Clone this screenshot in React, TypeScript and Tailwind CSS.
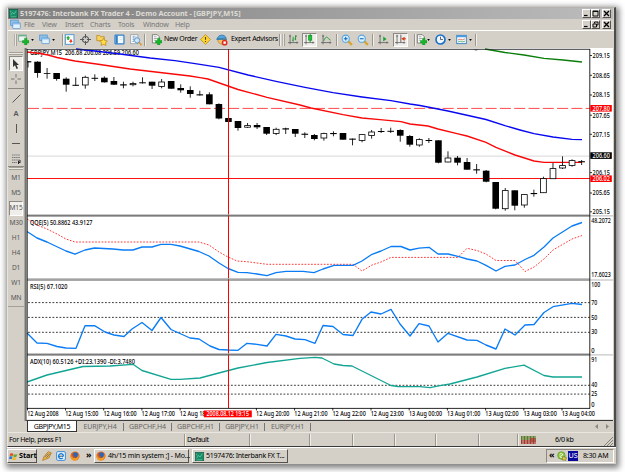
import React from "react";
import clsx from "clsx";

const FONT = "'Noto Sans', 'Open Sans', sans-serif";

// [bullish, body top, body bottom, high, low]
const candles: [number, number, number, number, number][] = [
  [0, 61.2, 62.4, 61, 67.5],
  [0, 61.7, 73, 61.3, 77.7],
  [0, 73, 73.8, 68, 78.7],
  [0, 73, 79, 73, 80.7],
  [0, 78.7, 84.7, 77.3, 91.7],
  [0, 84.8, 85.8, 77.3, 85.8],
  [1, 77, 85.3, 75.7, 88.7],
  [0, 77.8, 78.8, 74.3, 81],
  [0, 77.7, 82.3, 76.3, 82.6],
  [0, 81, 84.7, 77, 85],
  [0, 84.3, 85.5, 81.7, 88.3],
  [1, 83.3, 85, 81.7, 86.3],
  [0, 82.3, 83.3, 77.3, 83.5],
  [0, 81.7, 85.7, 81.7, 89],
  [1, 81.7, 86.7, 79, 88.3],
  [0, 81, 88.7, 81, 88.7],
  [0, 88, 90.3, 84.3, 92.7],
  [0, 90, 94, 86.3, 97.7],
  [0, 94.3, 95.4, 90.7, 95.6],
  [0, 94.3, 104.3, 92.3, 104.3],
  [0, 104, 118.5, 103.3, 119.3],
  [0, 118, 122, 118, 122],
  [0, 121, 128, 121, 130.7],
  [1, 125.3, 127.5, 123, 128],
  [0, 125, 127.3, 123, 129],
  [0, 127, 133.7, 127, 135],
  [1, 129, 133.7, 127.7, 135],
  [0, 128.3, 129.5, 127.7, 134],
  [0, 129, 133.7, 129, 137],
  [0, 133.7, 134.8, 132.3, 138],
  [0, 135, 139, 134, 140.3],
  [1, 133.3, 138.3, 132.7, 140.7],
  [0, 133, 134.1, 131.3, 136.3],
  [0, 133, 139.7, 133, 139.7],
  [0, 138.6, 139.7, 138.6, 145.3],
  [1, 134.3, 140.7, 134.3, 142.3],
  [1, 131.7, 135.7, 130, 138.7],
  [0, 131, 132, 128, 133],
  [0, 130.8, 131.8, 127.7, 133],
  [0, 130, 135.7, 129.3, 141.7],
  [0, 136, 144.7, 135, 146.7],
  [1, 139.3, 145.3, 138.3, 146.7],
  [0, 140, 141, 138, 143],
  [0, 140.3, 162.7, 140.3, 163.3],
  [1, 157.7, 162.3, 151.3, 162.3],
  [0, 157.7, 162.7, 156, 165.3],
  [0, 162, 169.7, 158, 169.7],
  [0, 169.3, 170.4, 164, 173.7],
  [0, 170.7, 181.7, 170, 182.3],
  [0, 182, 208.7, 182, 209.3],
  [1, 190.3, 209, 188, 210.7],
  [0, 190.3, 205.7, 190.3, 210.3],
  [1, 194.3, 205.3, 194.3, 207.7],
  [0, 193, 194.1, 189.7, 196.7],
  [1, 178.3, 193, 176.7, 193],
  [1, 168.3, 179, 163, 179],
  [1, 165.3, 168.3, 156.3, 169],
  [1, 160.3, 165.7, 159.3, 166.7],
  [0, 161.2, 162.3, 160, 165],
];

const fastMa =
  "27,52 40,53.5 48,55 57,57.5 75,61 100,64.5 130,69 160,72.5 190,76 200,77.7 208,79 228,86 238,89.5 267,97.3 300,105 311,108 343,114.7 362,118 380,119.7 401,121.7 410,124 428,126 438,129 457,133.7 467,136 486,142.3 496,147.3 515,155 534,161 544,162.4 582,162.4";
const slowMa =
  "76,49 95,51 120,54 150,58 175,60.7 200,64.3 219,67.3 248,75 276,81.3 305,87.3 333,92.7 362,97 391,100.7 410,104 420,105.5 448,111 486,119.5 505,125.7 520,130 534,133.7 553,137 572,139.3 582,139.6";
const longMa = "485,49 505,52.5 524,55 544,58.3 563,60 582,62";
const qqe =
  "27,231.5 37,238 47,242 66,251 75,254.2 85,250 94.5,248 113,249 123,250 133,250 142,247 152,247 161,244.3 171,244.3 180,246 199,251.5 209,256 219,263 228,268.5 238,272.3 247,272.7 257,274 267,275.7 276,272.7 286,271.4 303,271.4 314,272.7 323,269 334,265.4 353,265.4 362,261 372,254.3 381,251 391,246.5 401,246.5 410,250 419,248.2 429,247.3 438,254 448,254 458,256.3 467,259 477,261 486,265.3 496,271 505,266.3 515,265 525,259.5 534,255.3 544,247 553,238 572,226 582,222.5";
const qqeSignal =
  "27,219 37,225 47,229 57,234 66,239 75,242 199,242 209,245 219,252 228,257 237,261 247,261.7 267,264.3 353,264.3 362,271 372,265 381,262 391,257.4 458,257.4 467,248.3 477,250.5 486,254 496,260.5 515,260.5 525,271.5 534,267 544,259 553,250 572,239 582,235.5";
const rsi =
  "27,333 37,343 47,343.3 57,346.5 66,348 76,348.3 85,325.7 94.5,325.7 105,332 114,335 124,336.5 132,329 142,322.5 152,330.5 161,317.5 171,329.5 190,338 199,339 210,346 219,349.5 228,350 238,350.3 247,343.3 257,344.3 267,346 276,334.3 286,336 295,339 305,339.7 315,343.3 323,325.5 333,326.5 343,334.5 353,335.5 362,319.3 371,312 381,314 391,309.3 400,324 410,336 419,323.7 429,326 438,342 448,333.3 467,340 477,340.3 486,345 496,349 505,329 515,335 525,325 534,324.5 544,312.5 553,306.7 572,303.3 582,304.5";
const adx =
  "27,382 47,375 83,366.5 110,366 133,364.3 142,370.5 171,379.3 180,379.3 200,378 215,374 238,368 267,362.5 300,358.3 315,357.3 322,358 334,364 343,365.5 352,366 370,375 391,385.5 398,386.5 420,386.7 430,387.7 440,385.7 450,384 477,377 505,368.3 524,365.2 544,375.5 553,377 582,377";

const prices: [string, number][] = [
  ["209.15", 55.5],
  ["208.65", 75.3],
  ["208.15", 95],
  ["207.65", 115.2],
  ["207.15", 134.3],
  ["206.15", 172.6],
  ["205.65", 193],
  ["205.15", 211.8],
];

const priceTags: [string, number, string][] = [
  ["207.80", 108.3, "#ff0000"],
  ["206.60", 155.6, "#000000"],
  ["206.02", 178.7, "#ff0000"],
];

const scales: [string, number, number][] = [
  ["48.2072", 220.6, 19.6],
  ["17.6023", 275, 19.6],
  ["100", 284.7, 9],
  ["70", 302.5, 6],
  ["50", 317.2, 6],
  ["30", 332, 6],
  ["0", 350.3, 3.3],
  ["91", 359.8, 6],
  ["40", 385, 6],
  ["25", 393.8, 6],
  ["0", 404.6, 3.3],
];

const dates: [string, number][] = [
  ["12 Aug 2008", 27.5],
  ["12 Aug 15:00", 65.5],
  ["12 Aug 16:00", 103.7],
  ["12 Aug 17:00", 141.9],
  ["12 Aug 18:00", 180.1],
  ["12 Aug 20:00", 256.4],
  ["12 Aug 21:00", 294.6],
  ["12 Aug 22:00", 332.8],
  ["12 Aug 23:00", 371],
  ["13 Aug 00:00", 409.2],
  ["13 Aug 01:00", 447.4],
  ["13 Aug 02:00", 485.6],
  ["13 Aug 03:00", 523.8],
  ["13 Aug 04:00", 562],
];

interface TextProps {
  x: number;
  y: number;
  w: number;
  fill?: string;
  children: string;
}

// y is the vertical middle of the digits
const T = ({ x, y, w, fill = "#000", children }: TextProps) => (
  <text
    x={x}
    y={y + 2.3}
    textLength={w}
    lengthAdjust="spacingAndGlyphs"
    fill={fill}
    fontSize="6.4"
    fontWeight="500"
  >
    {children}
  </text>
);

const Chart = () => (
  <svg
    className="block shrink-0"
    width="587"
    height="373"
    viewBox="26 48 587 373"
    fontFamily={FONT}
  >
    <rect x="26" y="48" width="587" height="373" fill="#fff" />
    <T x={30} y={52.8} w={109}>
      {"GBPJPY,M15\u00a0 206.68 206.68 206.59 206.60"}
    </T>

    <path d="M27 156.1H590" stroke="#d8d8d8" />
    <path d="M28 108.4H590" stroke="#ff4a4a" strokeDasharray="11 3.3" />
    <path d="M27 178.5H590" stroke="#ff1010" />
    <path d="M473.5 49h5l-2.5 2.5z" fill="#b4b4b4" />

    <g fill="none" strokeWidth="1.35">
      <polyline points={longMa} stroke="#0a7d0a" />
      <polyline points={slowMa} stroke="#0808f0" />
      <polyline points={fastMa} stroke="#fa0808" />
    </g>

    {candles.map(([up, top, bottom, high, low], i) => {
      const x = 28 + i * 9.545;
      const left = i === 0 ? x - 1 : x - 3.3;
      const width = i === 0 ? 4.3 : 6.6;
      return (
        <g key={i}>
          <path d={`M${x} ${high}V${low}`} stroke="#000" strokeWidth=".85" />
          {up ? (
            <rect
              x={x - 2.9}
              y={top + 0.3}
              width="5.8"
              height={Math.max(bottom - top - 0.6, 1)}
              fill="#fff"
              stroke="#000"
              strokeWidth=".8"
            />
          ) : (
            <rect x={left} y={top} width={width} height={bottom - top} />
          )}
        </g>
      );
    })}

    {/* indicator windows */}
    <T x={30} y={222.5} w={62.5}>
      QQE(5) 50.8862 43.9127
    </T>
    <T x={30} y={286.3} w={37.5}>
      RSI(5) 67.1020
    </T>
    <T x={30} y={361.2} w={105}>
      ADX(10) 60.5126 +DI:23.1390 -DI:3.7480
    </T>
    <g stroke="#222" strokeWidth=".9" strokeDasharray="1.8 1.7">
      {[302.6, 317.4, 332.3, 385.3, 394.1].map((y) => (
        <path key={y} d={`M28 ${y}H590`} />
      ))}
    </g>
    <g fill="none" strokeWidth="1.35" strokeLinejoin="round">
      <polyline
        points={qqeSignal}
        stroke="#ff2020"
        strokeWidth=".9"
        strokeDasharray="1.7 1.5"
      />
      <polyline points={qqe} stroke="#0a7cf5" />
      <polyline points={rsi} stroke="#0a7cf5" />
      <polyline points={adx} stroke="#12a594" />
    </g>

    <path d="M228.5 49V408" stroke="#ff0000" />

    {/* pane frames */}
    <path d="M27 214.8H590M27 278.7H590M27 353.7H590" stroke="#b5b5b5" />
    <path d="M27 215.9H590M27 280H590M27 354.9H590" stroke="#555" strokeWidth="1.2" />
    <path d="M590 215.9H613M590 280H613M590 354.9H613" stroke="#888" strokeWidth=".6" />
    <path d="M26 49.3H590" stroke="#222" strokeWidth=".9" />
    <path d="M27.2 49V409" stroke="#111" strokeWidth=".9" />
    <path d="M589.8 49V408.5" stroke="#111" strokeWidth=".9" />
    <path d="M27 408.4H590" stroke="#111" strokeWidth=".9" />

    {prices.map(([label, y]) => (
      <g key={label}>
        <path d={`M590 ${y}h2`} stroke="#000" strokeWidth=".8" />
        <T x={592.6} y={y} w={17.2}>
          {label}
        </T>
      </g>
    ))}
    {priceTags.map(([label, y, color]) => (
      <g key={label}>
        <rect x="590.3" y={y - 3.3} width="21.5" height="6.6" fill={color} />
        <T x={592.6} y={y} w={17.2} fill="#fff">
          {label}
        </T>
      </g>
    ))}
    {scales.map(([label, y, w]) => (
      <T key={label + y} x={591.3} y={y} w={w}>
        {label}
      </T>
    ))}
    {dates.map(([label, x], i) => (
      <g key={label}>
        <path d={`M${x} 408v2.5`} stroke="#000" strokeWidth=".8" />
        <T x={x - 0.3} y={414} w={i === 0 ? 31.5 : 33.3}>
          {label}
        </T>
      </g>
    ))}
    <rect x="203.8" y="410.5" width="48" height="6.8" fill="#ff0000" />
    <T x={206.5} y={414} w={42.5} fill="#fff">
      2008.08.12 19:15
    </T>
    <path d="M26 420.4H613" stroke="#222" />
    <path d="M26.3 48V421" stroke="#555" strokeWidth=".7" />
  </svg>
);

interface IconProps {
  size?: number;
  children: React.ReactNode;
}

const Icon = ({ size = 11, children }: IconProps) => (
  <svg className="block shrink-0" width={size} height={size} viewBox="0 0 16 16" fill="none">
    {children}
  </svg>
);

const greenPlus = (
  <path
    d="M9.5 6h3.500v3.500H16V13h-3v3H9.500v-3h-3V9.500h3z"
    fill="#17b52a"
    stroke="#0a8d1a"
    strokeWidth=".6"
  />
);

const NewChartIcon = () => (
  <Icon>
    <rect x="1" y="1.5" width="11" height="9" fill="#e8f4ee" stroke="#5f9a80" />
    <path d="M1 2.5h11" stroke="#6cae90" strokeWidth="2" />
    {greenPlus}
  </Icon>
);

const ProfilesIcon = () => (
  <Icon>
    <rect x="1" y="1.5" width="11" height="8" fill="#8fc3ee" stroke="#4b8ac6" />
    <rect x="4" y="5.5" width="11" height="8.5" rx="1" fill="#dff0ff" stroke="#4b8ac6" />
    <path d="M4.5 7h10" stroke="#6eacdf" strokeWidth="1.5" />
  </Icon>
);

const MarketIcon = () => (
  <Icon>
    <rect x="2" y="1" width="12.5" height="14" fill="#fff" stroke="#4b9ad6" strokeWidth="1.4" />
    <path d="M6 2.5L9 6H3z" fill="#1fae35" />
    <path d="M4.500 6h3v2.500h-3z" fill="#1fae35" />
    <path d="M8.500 8h3v2h1.500L10 13 7 10h1.500z" fill="#e8432c" />
  </Icon>
);

const TargetIcon = () => (
  <Icon>
    <circle cx="8" cy="8" r="4.5" stroke="#55585c" strokeWidth="1.5" />
    <path d="M8 0v6M8 10v6M0 8h6M10 8h6" stroke="#55585c" strokeWidth="1.5" />
  </Icon>
);

const FavoritesIcon = () => (
  <Icon size={12}>
    <path d="M1 2h4l1 1.5h5V9H1z" fill="#f6d260" stroke="#b98a1b" />
    <path
      d="M10 5.5l1.7 3.2 3.5.6-2.5 2.500.6 3.500-3.300-1.600-3.200 1.600.6-3.500-2.500-2.500 3.500-.6z"
      fill="#ffdf45"
      stroke="#c08a10"
    />
  </Icon>
);

const PanelIcon = () => (
  <Icon>
    <rect x="1.5" y="1.5" width="13" height="13" rx="1" fill="#f5faff" stroke="#2f7fcb" strokeWidth="1.8" />
    <path d="M4 2v12" stroke="#2f7fcb" strokeWidth="3" />
    <path d="M8 5h5M8 8h5" stroke="#d5dde5" />
  </Icon>
);

const TesterIcon = () => (
  <Icon size={12}>
    <rect x="1" y="1" width="9.5" height="12" fill="#fff" stroke="#8a949e" />
    <path d="M3 4h6M3 7h6M3 10h3M5 2v8" stroke="#7f9fc0" />
    <circle cx="9.5" cy="8.5" r="3.5" fill="#cfe8fb" fillOpacity=".85" stroke="#3a86c8" />
    <path d="M12 11l3.5 4" stroke="#d59b2e" strokeWidth="2" />
  </Icon>
);

const OrderIcon = () => (
  <Icon>
    <path d="M2 1h7l3 3v9H2z" fill="#fff" stroke="#555" />
    <path d="M4 4h4M4 6.5h5M4 9h3" stroke="#888" />
    {greenPlus}
  </Icon>
);

const AlertIcon = () => (
  <Icon>
    <path d="M8 .8L15.2 8 8 15.2.8 8z" fill="#fbd433" stroke="#b9860d" />
    <path d="M8 4.5v4M8 10v1.7" stroke="#5a4100" strokeWidth="1.6" />
  </Icon>
);

const AdvisorIcon = () => (
  <Icon size={12}>
    <circle cx="8" cy="8" r="5.5" fill="#f2c267" stroke="#b68530" />
    <path d="M1.500 6.500C3 0 12 0 13.500 5.500z" fill="#57a5dc" stroke="#2875ae" />
    <path d="M.5 7h14" stroke="#2875ae" strokeWidth="1.5" />
    <circle cx="11.5" cy="11.5" r="3.8" fill="#e02a1c" />
    <rect x="9.9" y="9.9" width="3.2" height="3.2" fill="#fff" />
  </Icon>
);

const axes = <path d="M3 1v14M0 12.5h15M1.5 3h3M13 11v3" stroke="#555" strokeWidth="1.1" />;

const BarsIcon = () => (
  <Icon>
    {axes}
    <path d="M7.5 4v7M5.8 9h1.7M11 2v7M11 3h2M9.5 7H11" stroke="#17912a" strokeWidth="1.3" />
  </Icon>
);

const CandleIcon = () => (
  <Icon>
    {axes}
    <path d="M9 0v12" stroke="#0d8a20" strokeWidth="1.3" />
    <rect x="6.8" y="2" width="4.5" height="7" fill="#18c536" stroke="#0d8a20" />
  </Icon>
);

const LineIcon = () => (
  <Icon>
    {axes}
    <path d="M4 10c2-6 5-7 6.500-3.500L14 9" stroke="#2a9a3c" strokeWidth="1.3" />
  </Icon>
);

const ZoomIcon = ({ plus }: { plus?: boolean }) => (
  <Icon size={12}>
    <path d="M9.5 9.5l5 5" stroke="#d8a52c" strokeWidth="3" />
    <circle cx="6.3" cy="6.3" r="4.8" fill="#d9f0ff" stroke="#5ba3dc" strokeWidth="1.4" />
    <path d="M3.8 6.3h5" stroke="#1f6fb8" strokeWidth="1.5" />
    {plus && <path d="M6.3 3.8v5" stroke="#1f6fb8" strokeWidth="1.5" />}
  </Icon>
);

const ScrollIcon = () => (
  <Icon>
    {axes}
    <path d="M7.5 3.5l5 3.700-5 3.700z" fill="#19a52f" />
  </Icon>
);

const ShiftIcon = () => (
  <Icon>
    {axes}
    <path d="M8.5 1v11" stroke="#4a4a4a" strokeWidth="1.2" />
    <path d="M14 4v6l-5-3z" fill="#d8401a" />
    <path d="M12 7h4" stroke="#d8401a" strokeWidth="1.5" />
  </Icon>
);

const ClockIcon = () => (
  <Icon>
    <circle cx="8" cy="8" r="6.5" fill="#eef7ff" stroke="#1c6fc9" strokeWidth="2.4" />
    <path d="M8 4v4h3.5" stroke="#444" strokeWidth="1.2" />
  </Icon>
);

const TemplateIcon = () => (
  <Icon>
    <rect x="1" y="2" width="14" height="12" fill="#f6fbff" stroke="#3b86c8" strokeWidth="1.4" />
    <path d="M1 3.5h14" stroke="#4b9be0" strokeWidth="2.4" />
    <path d="M3 8.5l3-1 3 1 4-1.5" stroke="#d05030" />
    <path d="M3 11.5l3-1 3 1 4-1" stroke="#2a9a3c" />
  </Icon>
);

const FirefoxIcon = () => (
  <Icon size={10}>
    <circle cx="8" cy="8" r="7.3" fill="#e8731a" />
    <circle cx="8.5" cy="6.5" r="4.5" fill="#2f63b5" />
    <path d="M1 5c1 5 4 7 8 6 3-.5 4-3 3.500-6 3 5 0 10.300-5 10.300S.3 11 1 5z" fill="#f39a1f" />
    <path d="M2 3l4 2-1 3 4 1-3 2.500z" fill="#dd4f12" />
  </Icon>
);

const AppIcon = () => (
  <Icon size={9}>
    <rect x=".5" y=".5" width="15" height="15" fill="#178a66" stroke="#0a5540" />
    <path d="M3 11l3-5 3 3 4-6M3 14h10M3 3v3" stroke="#6bd0a8" strokeWidth="1.3" />
  </Icon>
);

const Arrow = () => (
  <svg className="block shrink-0" width="3" height="2" viewBox="0 0 4 3">
    <path d="M0 0h4L2 3z" />
  </svg>
);

const Sep = () => (
  <div className="h-3 w-0.5 shrink-0 border-r border-l border-r-[#f0eeea] border-l-[#9a978f]" />
);

const Grip = () => (
  <div className="h-3 w-[3px] shrink-0 border-x border-r-[#a4a199] border-l-[#b4b1a9] bg-[#eae7e1]" />
);

// each cell is centred on its icon
const Cell = ({ className, children }: { className: string; children: React.ReactNode }) => (
  <div className={clsx("flex h-full shrink-0 items-center justify-center", className)}>
    {children}
  </div>
);

const pressed =
  "border border-t-[#8c8982] border-l-[#8c8982] border-r-white border-b-white bg-[#f0eeea]";

const Toolbar = () => (
  <div className="flex h-[18px] items-center border-t border-white bg-[#d4d0c8] pl-[6px] text-[7px] tracking-[-0.28px] whitespace-nowrap text-black">
    <Grip />
    <Cell className="w-[13px]"><NewChartIcon /></Cell>
    <Cell className="w-[4px]"><Arrow /></Cell>
    <Cell className="ml-[3px] w-[14px]"><ProfilesIcon /></Cell>
    <Cell className="w-[4px]"><Arrow /></Cell>
    <Cell className="ml-[6px] w-[3px]"><Sep /></Cell>
    <Cell className="w-[10px]"><MarketIcon /></Cell>
    <Cell className="w-[23px]"><TargetIcon /></Cell>
    <Cell className="w-[10px]"><FavoritesIcon /></Cell>
    <Cell className="w-[24px]"><PanelIcon /></Cell>
    <Cell className="w-[9px]"><TesterIcon /></Cell>
    <Cell className="w-[10px]"><Sep /></Cell>
    <Cell className="w-[12px]"><OrderIcon /></Cell>
    <div className="w-[35px] pl-[2px]">New Order</div>
    <Cell className="w-[17px]"><AlertIcon /></Cell>
    <Cell className="w-[16px]"><AdvisorIcon /></Cell>
    <div className="w-[49px] pl-px">Expert Advisors</div>
    <Sep />
    <Cell className="w-[4px]"><Grip /></Cell>
    <Cell className="w-[16px]"><BarsIcon /></Cell>
    <Cell className="ml-px">
      <div className={clsx("flex h-[14px] w-[15px] items-center justify-center", pressed)}>
        <CandleIcon />
      </div>
    </Cell>
    <Cell className="w-[19px]"><LineIcon /></Cell>
    <Cell className="w-[2px]"><Sep /></Cell>
    <Cell className="w-[17px]"><ZoomIcon plus /></Cell>
    <Cell className="w-[16px]"><ZoomIcon /></Cell>
    <Cell className="w-[4px]"><Sep /></Cell>
    <Cell className="w-[17px]"><ScrollIcon /></Cell>
    <Cell className="ml-px">
      <div className={clsx("flex h-[14px] w-[15px] items-center justify-center", pressed)}>
        <ShiftIcon />
      </div>
    </Cell>
    <Cell className="ml-[5px] w-[3px]"><Sep /></Cell>
    <Cell className="w-[10px]"><OrderIcon /></Cell>
    <Cell className="w-[5px]"><Arrow /></Cell>
    <Cell className="ml-[3px] w-[13px]"><ClockIcon /></Cell>
    <Cell className="w-[4px]"><Arrow /></Cell>
    <Cell className="ml-[4px] w-[13px]"><TemplateIcon /></Cell>
    <Cell className="w-[4px]"><Arrow /></Cell>
    <Cell className="w-[8px]"><Sep /></Cell>
  </div>
);

const WinButton = ({ kind }: { kind: "min" | "max" | "restore" | "close" }) => (
  <div className="flex h-[9px] w-[9px] items-center justify-center border border-t-white border-r-[#55534e] border-b-[#55534e] border-l-white bg-[#d4d0c8]">
    <svg width="7" height="7" viewBox="0 0 7 7" fill="none" stroke="#000">
      {kind === "min" && <path d="M1 5.5h3.5" strokeWidth="1.2" />}
      {kind === "max" && <path d="M1 1h5v5H1zM1 1.5h5" strokeWidth=".9" />}
      {kind === "restore" && <path d="M2.5 2.5V1H6v3H4.500M1 3h3.500v3H1z" strokeWidth=".9" />}
      {kind === "close" && <path d="M1 1l5 5M6 1L1 6" strokeWidth="1.3" />}
    </svg>
  </div>
);

const HGrip = () => (
  <div className="mx-auto h-[3px] w-[14px] shrink-0 border-y border-t-[#a4a199] border-b-[#a4a199] bg-[#ece9e3]" />
);

const Tool = ({ className, children }: { className?: string; children: React.ReactNode }) => (
  <div className={clsx("flex h-[15px] items-center justify-center", className)}>{children}</div>
);

const periods = ["M1", "M5", "M15", "M30", "H1", "H4", "D1", "W1", "MN"];

const SideBar = () => (
  <div className="flex w-[17px] shrink-0 flex-col border-r border-[#aaa7a0] bg-[#d4d0c8] pt-[4px]">
    <HGrip />
    <div className={clsx("mx-px mt-px flex h-[15px] items-center justify-center", pressed)}>
      <svg width="8" height="10" viewBox="0 0 8 10">
        <path d="M1 0v8l2-1.700L4.500 10l1.500-.7L4.500 6H7z" fill="#333" />
      </svg>
    </div>
    <Tool>
      <svg width="10" height="10" viewBox="0 0 10 10" stroke="#777">
        <path d="M5 0v3.500M5 6.500V10M0 5h3.500M6.500 5H10" />
      </svg>
    </Tool>
    <div className="mt-0.5 border-t border-[#8c8982]" />
    <Tool className="mt-0.5">
      <svg width="9" height="9" viewBox="0 0 9 9" stroke="#555">
        <path d="M.5 8.5l8-8" />
      </svg>
    </Tool>
    <Tool>
      <span className="text-[7.5px] font-semibold text-[#555]">A</span>
    </Tool>
    <Tool>
      <svg width="1" height="9" viewBox="0 0 1 9">
        <path d="M.5 0v9" stroke="#555" />
      </svg>
    </Tool>
    <Tool>
      <svg width="8" height="1" viewBox="0 0 8 1">
        <path d="M0 .5h8" stroke="#555" />
      </svg>
    </Tool>
    <Tool>
      <svg width="10" height="10" viewBox="0 0 10 10" stroke="#777" fill="none">
        <path d="M1 1h8M1 3.5h8M1 6h8M1 8.5h5" strokeDasharray="1.5 .6" />
        <path d="M7.5 10V7H10M7.5 8.5H9.5" stroke="#222" />
      </svg>
    </Tool>
    <div className="border-t border-[#8c8982]" />
    <HGrip />
    <div className="mt-px border-b border-[#a4a199] text-center text-[6.6px] tracking-[-0.2px] text-[#555]">
      {periods.map((p) => (
        <div
          key={p}
          className={clsx(
            "mx-px flex h-[15px] items-center justify-center leading-none",
            p === "M15" && pressed
          )}
        >
          {p}
        </div>
      ))}
    </div>
  </div>
);

const tabs: [string, string][] = [
  ["EURJPY,H4", "w-[47px]"],
  ["GBPCHF,H4", "w-[48px]"],
  ["GBPCHF,H1", "w-[48px]"],
  ["GBPJPY,H1", "w-[45px]"],
  ["EURJPY,H1", "w-[46px]"],
];

const TabBar = () => (
  <div className="flex h-[11px] shrink-0 items-center bg-[#d4d0c8] pl-[19px] text-[7px] leading-none tracking-[-0.1px]">
    <div className="flex h-full w-[50px] items-center justify-center border-r border-b border-l border-[#333] bg-white tracking-[-0.35px] text-black">
      GBPJPY,M15
    </div>
    {tabs.map(([name, width]) => (
      <div
        key={name}
        className={clsx(
          "flex h-[8px] shrink-0 items-center justify-center border-r border-[#777] text-[#666]",
          width
        )}
      >
        {name}
      </div>
    ))}
    <div className="mr-[5px] ml-auto flex gap-[6px]">
      <svg width="4" height="5" viewBox="0 0 4 5"><path d="M3 0v5L0 2.500z" fill="#8a8780" /></svg>
      <svg width="4" height="5" viewBox="0 0 4 5"><path d="M1 0v5l3-2.500z" fill="#8a8780" /></svg>
    </div>
  </div>
);

const StatusBar = () => (
  <div className="flex h-[14px] shrink-0 items-center border-t border-[#e9e6e0] bg-[#d4d0c8] text-[7.1px] leading-none tracking-[-0.38px] whitespace-nowrap text-black">
    <div className="w-[175px] pl-px">For Help, press F1</div>
    <Cell className="w-[4px]"><Sep /></Cell>
    <div className="w-[61px]">Default</div>
    <Cell className="w-[3px]"><Sep /></Cell>
    <Cell className="ml-[57px] w-[3px]"><Sep /></Cell>
    <Cell className="ml-[40px] w-[3px]"><Sep /></Cell>
    <Cell className="ml-[39px] w-[3px]"><Sep /></Cell>
    <Cell className="ml-[38px] w-[3px]"><Sep /></Cell>
    <Cell className="ml-[40px] w-[3px]"><Sep /></Cell>
    <Cell className="ml-[36px] w-[3px]"><Sep /></Cell>
    <svg className="ml-[2px] block" width="15" height="8" viewBox="0 0 15 8">
      <path d="M0 2H15" stroke="#5b7d2a" strokeWidth="4" strokeDasharray="1.1 .4" />
      <path d="M0 6H15" stroke="#a8392e" strokeWidth="4" strokeDasharray="1.1 .4" />
      <path d="M9 4H15" stroke="#a8392e" strokeWidth="4" strokeDasharray="1.1 .4" />
    </svg>
    <div className="ml-[19px]">6/0 kb</div>
    <svg className="mr-px ml-auto block self-end" width="9" height="9" viewBox="0 0 9 9" stroke="#85827b">
      <path d="M0 9l9-9M3 9l6-6M6 9l3-3" />
    </svg>
  </div>
);

const raised =
  "border border-t-white border-l-white border-r-[#55534e] border-b-[#55534e] bg-[#d4d0c8]";

const TaskBar = () => (
  <div className="flex h-[17px] shrink-0 items-center border-t border-white bg-[#d4d0c8] text-[7.1px] leading-none tracking-[-0.22px] whitespace-nowrap text-black">
    <div className={clsx("flex h-[14px] w-[30px] items-center gap-px pl-px", raised)}>
      <svg className="block shrink-0" width="9" height="9" viewBox="0 0 16 16">
        <path d="M2 3c2-1.500 4-1 5.500 0L6.500 7.500C5 6.500 3 6.500 1 7.500z" fill="#e8481e" />
        <path d="M8.500 3.500c2 1.500 4 1.500 6.500 0L13.500 8c-2 1.300-4 1.300-6 0z" fill="#62ae2c" />
        <path d="M.8 8.500c2-1.300 4-1 5.500 0L5 13c-1.500-1-3.500-1-5 0z" fill="#2f78d8" />
        <path d="M7.200 9c2 1.300 4 1.300 6 0l-1.300 4.500c-2 1.300-4 1.300-6 0z" fill="#f5b81c" />
      </svg>
      <span className="text-[7.3px] font-bold tracking-[-0.1px]">Start</span>
    </div>
    <div className="ml-[5px]">
      <Icon size={10}>
        <path d="M1 15l2-6 7-8 5 2-4 8-7 3z" fill="#f4b53a" stroke="#a0681a" />
        <path d="M4 10l6-6M7 11l6-7" stroke="#6c7688" strokeWidth="1.5" />
      </Icon>
    </div>
    <div className="ml-[4px]">
      <Icon size={10}>
        <rect x="1" y="1" width="14" height="14" rx="2" fill="#e6f3ff" stroke="#3487d6" strokeWidth="1.5" />
        <path d="M12 8.5H5M12 8A4 4 0 1 0 11 11" stroke="#1f78d1" strokeWidth="2" />
        <circle cx="8" cy="8" r="1.3" fill="#f0a030" />
      </Icon>
    </div>
    <div className="ml-[4px]"><FirefoxIcon /></div>
    <div className="ml-[6px] w-[6px] pb-[3px] text-[9px] font-bold">»</div>
    <div className={clsx("ml-[2px] flex h-[14px] w-[95px] items-center gap-[2px] pl-px", raised)}>
      <FirefoxIcon />
      <span>4h/15 min system ;] - Mo...</span>
    </div>
    <div className={clsx("ml-[3px] flex h-[14px] w-[96px] items-center gap-[2px] pl-[2px]", raised)}>
      <AppIcon />
      <span className="tracking-[-0.28px]">5197476: Interbank FX T...</span>
    </div>
    <div className="mr-[2px] ml-auto flex h-[14px] w-[68px] items-center border border-t-[#8c8982] border-r-white border-b-white border-l-[#8c8982] pl-[2px]">
      <span className="w-[6px] pb-[3px] text-[9px] font-bold">«</span>
      <div className="ml-[2px]">
        <Icon size={10}>
          <circle cx="7" cy="7" r="6" fill="#8cc63e" stroke="#5d9420" />
          <path d="M4 6c2-3 5-2 5 0s-4 1-4 3 4 2 5 0" stroke="#fff" strokeWidth="1.6" />
          <path d="M9 9l6 1-1 5-6-1z" fill="#d8d24a" stroke="#6a6a20" />
        </Icon>
      </div>
      <div className="ml-px flex h-[10px] w-[10px] items-center justify-center bg-[#0a0a9a] text-[7.2px] text-white">
        US
      </div>
      <span className="ml-[5px]">8:30 AM</span>
    </div>
  </div>
);

export default function App() {
  return (
    <div
      className="h-[472px] w-[625px] overflow-hidden bg-white pt-[7px] pl-[7px]"
      style={{ fontFamily: FONT }}
    >
      <div className="flex h-[457px] w-[609px] flex-col bg-[#d4d0c8] shadow-[1px_2px_6px_2px_rgba(0,0,0,0.5)]">
        <div className="flex h-[440px] flex-col border-t border-r-2 border-b border-l border-t-[#b5b2ab] border-r-[#4d4c49] border-b-[#3b3a38] border-l-[#e6e3dd]">
          <div className="mr-px flex h-[11px] shrink-0 items-center bg-linear-to-r from-[#7f7f7f] to-[#bcbcbc] pr-[2px] pl-px">
            <AppIcon />
            <div className="ml-[2px] text-[7.3px] leading-none font-bold tracking-[-0.08px] whitespace-nowrap text-[#dedbd4]">
              5197476: Interbank FX Trader 4 - Demo Account - [GBPJPY,M15]
            </div>
            <div className="ml-auto flex">
              <WinButton kind="min" />
              <WinButton kind="max" />
              <div className="ml-[2px]"><WinButton kind="close" /></div>
            </div>
          </div>
          <div className="flex h-[11px] shrink-0 items-center pr-[3px] pl-[2px] text-[7.1px] leading-none tracking-[-0.2px] text-[#777]">
            <ProfilesIcon />
            <div className="ml-[3px] w-[18px]">File</div>
            <div className="w-[23px]">View</div>
            <div className="w-[25px]">Insert</div>
            <div className="w-[28px]">Charts</div>
            <div className="w-[25px]">Tools</div>
            <div className="w-[32px]">Window</div>
            <div>Help</div>
            <div className="ml-auto flex">
              <WinButton kind="min" />
              <WinButton kind="restore" />
              <div className="ml-[2px]"><WinButton kind="close" /></div>
            </div>
          </div>
          <Toolbar />
          <div className="flex h-[373px] shrink-0">
            <SideBar />
            <div className="w-px bg-[#77756f]" />
            <Chart />
          </div>
          <TabBar />
          <StatusBar />
        </div>
        <TaskBar />
      </div>
    </div>
  );
}
